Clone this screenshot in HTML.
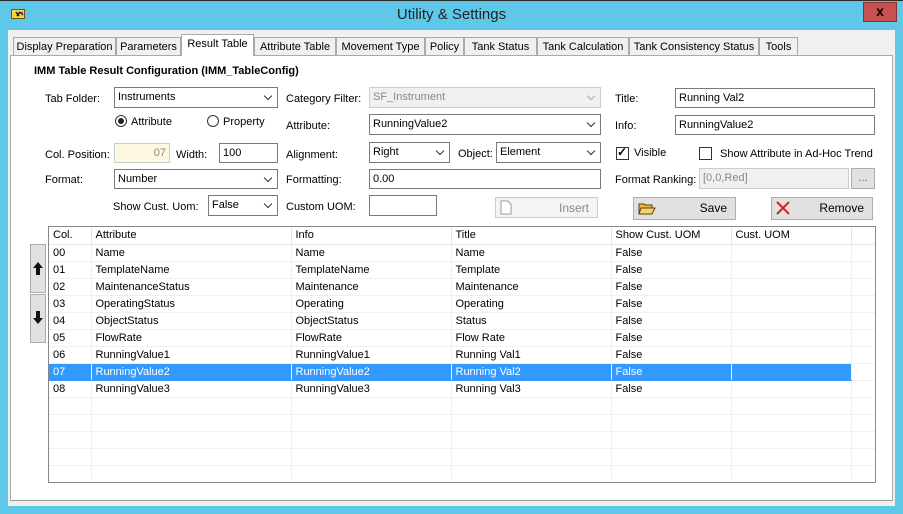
<!DOCTYPE html>
<html><head><meta charset="utf-8"><style>
*{box-sizing:border-box;margin:0;padding:0}
body{width:903px;height:514px;overflow:hidden;background:#5fc8e9;font-family:"Liberation Sans",sans-serif;font-size:11px;color:#000;position:relative}
.a{position:absolute;white-space:nowrap}
.l{margin-top:2px}
.in{position:absolute;background:#fff;border:1px solid #7a7a7a;padding:3px 3px;line-height:13px;white-space:nowrap;overflow:hidden}
.dd:after{content:"";position:absolute;right:6px;top:5px;width:5px;height:5px;border-right:1.5px solid #333;border-bottom:1.5px solid #333;transform:rotate(45deg)}
.dis{background:#f0f0f0;border-color:#ccc;color:#888}
.dis:after{border-color:#aaa}
.btn{position:absolute;background:#e1e1e1;border:1px solid #adadad;text-align:right;padding:4px 8px;line-height:13px;font-size:12px}
.tab{position:absolute;top:37px;height:18px;background:#f0f0f0;border:1px solid #aaa;border-bottom:none;padding:3px 0;text-align:center;line-height:13px;white-space:nowrap;overflow:hidden}
.wrap{position:absolute;left:48px;top:226px;width:828px;height:257px;background:#fff;border:1px solid #828790;overflow:hidden}
table{border-collapse:collapse;table-layout:fixed;width:826px}
td{height:17px;border-right:1px solid #f0f0f0;border-bottom:1px solid #f0f0f0;padding:0 4px;line-height:16px;white-space:nowrap;overflow:hidden}
tr.h td{background:#fff;border-right:1px solid #e5e5e5;border-bottom:1px solid #e5e5e5}
tr.s td{background:#3399ff;color:#fff;border-color:#3399ff #f0f0f0}
</style></head><body>
<div class="a" style="left:0;top:0;width:903px;height:1px;background:#2b2b2b"></div>
<svg class="a" style="left:11px;top:8px" width="15" height="12"><rect x="0.5" y="1.5" width="13" height="9" fill="#f3d648" stroke="#6a5a10"/><path d="M5 4l3 4M9 4l-3 4M9 4l3 3" stroke="#222" stroke-width="1.5"/><rect x="10" y="4" width="2" height="2" fill="#c22"/></svg>
<div class="a" style="left:0;width:903px;top:6px;text-align:center;font-size:15px;color:#222">Utility &amp; Settings</div>
<div class="a" style="left:863px;top:2px;width:34px;height:20px;background:#c75050;border:1px solid #8a3030"></div>
<div class="a" style="left:863px;top:2px;width:34px;text-align:center;font-size:14px;font-weight:bold;line-height:19px">x</div>
<div class="a" style="left:8px;top:30px;width:887px;height:476px;background:#f0f0f0"></div>
<div class="a" style="left:10px;top:55px;width:883px;height:446px;background:#fff;border:1px solid #aaa;border-bottom:1px solid #999"></div>
<div class="tab" style="left:13px;width:103px">Display Preparation</div>
<div class="tab" style="left:116px;width:65px">Parameters</div>
<div class="tab" style="left:181px;top:34px;height:22px;width:73px;background:#fff;border-color:#aaa">Result Table</div>
<div class="tab" style="left:254px;width:82px">Attribute Table</div>
<div class="tab" style="left:336px;width:89px">Movement Type</div>
<div class="tab" style="left:425px;width:39px">Policy</div>
<div class="tab" style="left:464px;width:73px">Tank Status</div>
<div class="tab" style="left:537px;width:92px">Tank Calculation</div>
<div class="tab" style="left:629px;width:130px">Tank Consistency Status</div>
<div class="tab" style="left:759px;width:39px">Tools</div>

<div class="a" style="left:34px;top:65px;font-weight:bold">IMM Table Result Configuration (IMM_TableConfig)</div>
<div class="a l" style="left:45px;top:91px">Tab Folder:</div>
<div class="in dd" style="left:114px;top:87px;width:164px;height:21px">Instruments</div>
<div class="a l" style="left:286px;top:91px">Category Filter:</div>
<div class="in dd dis" style="left:369px;top:87px;width:232px;height:21px">SF_Instrument</div>
<div class="a l" style="left:615px;top:91px">Title:</div>
<div class="in" style="left:675px;top:88px;width:200px;height:20px">Running Val2</div>

<div class="a" style="left:115px;top:115px;width:12px;height:12px;border:1px solid #333;border-radius:50%"></div>
<div class="a" style="left:118px;top:118px;width:6px;height:6px;background:#222;border-radius:50%"></div>
<div class="a l" style="left:131px;top:114px">Attribute</div>
<div class="a" style="left:207px;top:115px;width:12px;height:12px;border:1px solid #333;border-radius:50%"></div>
<div class="a l" style="left:223px;top:114px">Property</div>
<div class="a l" style="left:286px;top:118px">Attribute:</div>
<div class="in dd" style="left:369px;top:114px;width:232px;height:21px">RunningValue2</div>
<div class="a l" style="left:615px;top:118px">Info:</div>
<div class="in" style="left:675px;top:115px;width:200px;height:20px">RunningValue2</div>

<div class="a l" style="left:45px;top:147px">Col. Position:</div>
<div class="in" style="left:114px;top:143px;width:56px;height:20px;background:#fdf8e0;border-color:#ccc;color:#888;text-align:right">07</div>
<div class="a l" style="left:176px;top:147px">Width:</div>
<div class="in" style="left:219px;top:143px;width:59px;height:20px">100</div>
<div class="a l" style="left:286px;top:147px">Alignment:</div>
<div class="in dd" style="left:369px;top:142px;width:81px;height:21px">Right</div>
<div class="a l" style="left:458px;top:146px">Object:</div>
<div class="in dd" style="left:496px;top:142px;width:105px;height:21px">Element</div>
<div class="a" style="left:616px;top:147px;width:13px;height:13px;border:1px solid #333;background:#fff"></div>
<div class="a" style="left:617px;top:145px;font-size:12px;font-weight:bold">✓</div>
<div class="a l" style="left:634px;top:145px">Visible</div>
<div class="a" style="left:699px;top:147px;width:13px;height:13px;border:1px solid #333;background:#fff"></div>
<div class="a l" style="left:720px;top:146px">Show Attribute in Ad-Hoc Trend</div>

<div class="a l" style="left:45px;top:172px">Format:</div>
<div class="in dd" style="left:114px;top:169px;width:164px;height:20px">Number</div>
<div class="a l" style="left:286px;top:172px">Formatting:</div>
<div class="in" style="left:369px;top:169px;width:232px;height:20px">0.00</div>
<div class="a l" style="left:615px;top:172px">Format Ranking:</div>
<div class="in dis" style="left:699px;top:168px;width:150px;height:21px">[0,0,Red]</div>
<div class="a" style="left:851px;top:168px;width:24px;height:21px;background:#e1e1e1;border:1px solid #adadad;text-align:center;line-height:18px;color:#666">...</div>

<div class="a l" style="left:113px;top:199px">Show Cust. Uom:</div>
<div class="in dd" style="left:208px;top:195px;width:70px;height:21px">False</div>
<div class="a l" style="left:286px;top:199px">Custom UOM:</div>
<div class="in" style="left:369px;top:195px;width:68px;height:21px"></div>

<div class="btn" style="left:495px;top:197px;width:103px;height:21px;background:#f4f4f4;border-color:#ccc;color:#888">Insert</div>
<svg class="a" style="left:500px;top:200px" width="12" height="15"><path d="M1 1h7l3 3v10H1z" fill="#fff" stroke="#999"/></svg>
<div class="btn" style="left:633px;top:197px;width:103px;height:23px">Save</div>
<svg class="a" style="left:638px;top:201px" width="18" height="14"><path d="M1 3h5l1 1h7v9H1z" fill="#e8b84a" stroke="#5a4010"/><path d="M3 7h14l-3 6H1z" fill="#f5d470" stroke="#5a4010"/></svg>
<div class="btn" style="left:771px;top:197px;width:102px;height:23px">Remove</div>
<svg class="a" style="left:776px;top:201px" width="14" height="14"><path d="M1 1l12 12M13 1L1 13" stroke="#e02020" stroke-width="2"/></svg>

<div class="a" style="left:30px;top:244px;width:16px;height:49px;background:#e1e1e1;border:1px solid #adadad"></div>
<svg class="a" style="left:32px;top:262px" width="12" height="13"><path d="M6 0L1 6h3v7h4V6h3z" fill="#111"/></svg>
<div class="a" style="left:30px;top:294px;width:16px;height:49px;background:#e1e1e1;border:1px solid #adadad"></div>
<svg class="a" style="left:32px;top:311px" width="12" height="13"><path d="M6 13L1 7h3V0h4v7h3z" fill="#111"/></svg>

<div class="wrap">
<table>
<colgroup><col style="width:42px"><col style="width:200px"><col style="width:160px"><col style="width:160px"><col style="width:120px"><col style="width:120px"><col style="width:24px"></colgroup>
<tr class="h"><td>Col.</td><td>Attribute</td><td>Info</td><td>Title</td><td>Show Cust. UOM</td><td>Cust. UOM</td><td></td></tr>
<tr><td>00</td><td>Name</td><td>Name</td><td>Name</td><td>False</td><td></td><td></td></tr>
<tr><td>01</td><td>TemplateName</td><td>TemplateName</td><td>Template</td><td>False</td><td></td><td></td></tr>
<tr><td>02</td><td>MaintenanceStatus</td><td>Maintenance</td><td>Maintenance</td><td>False</td><td></td><td></td></tr>
<tr><td>03</td><td>OperatingStatus</td><td>Operating</td><td>Operating</td><td>False</td><td></td><td></td></tr>
<tr><td>04</td><td>ObjectStatus</td><td>ObjectStatus</td><td>Status</td><td>False</td><td></td><td></td></tr>
<tr><td>05</td><td>FlowRate</td><td>FlowRate</td><td>Flow Rate</td><td>False</td><td></td><td></td></tr>
<tr><td>06</td><td>RunningValue1</td><td>RunningValue1</td><td>Running Val1</td><td>False</td><td></td><td></td></tr>
<tr class="s"><td>07</td><td>RunningValue2</td><td>RunningValue2</td><td>Running Val2</td><td>False</td><td></td><td style="background:#fff;border-color:#f0f0f0"></td></tr>
<tr><td>08</td><td>RunningValue3</td><td>RunningValue3</td><td>Running Val3</td><td>False</td><td></td><td></td></tr>
<tr><td></td><td></td><td></td><td></td><td></td><td></td><td></td></tr>
<tr><td></td><td></td><td></td><td></td><td></td><td></td><td></td></tr>
<tr><td></td><td></td><td></td><td></td><td></td><td></td><td></td></tr>
<tr><td></td><td></td><td></td><td></td><td></td><td></td><td></td></tr>
<tr><td></td><td></td><td></td><td></td><td></td><td></td><td></td></tr>
<tr><td></td><td></td><td></td><td></td><td></td><td></td><td></td></tr>
</table>
</div>
</body></html>
